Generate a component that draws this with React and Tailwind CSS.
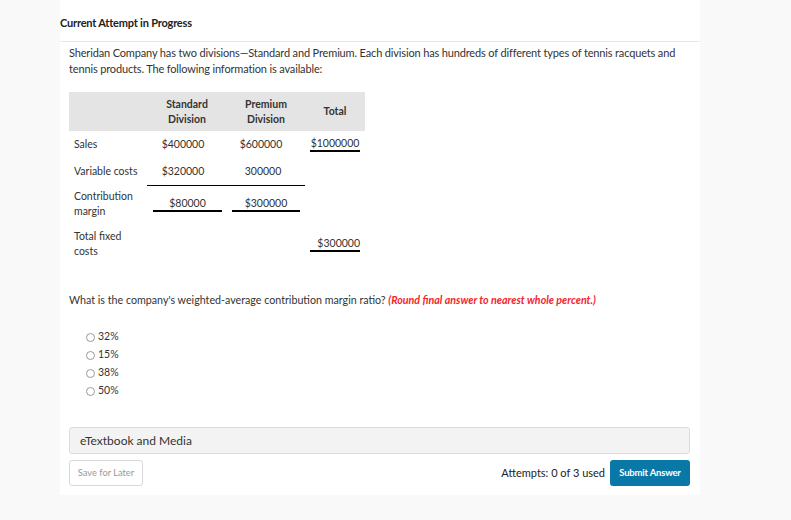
const FONT = { fontFamily: 'Lato, "Open Sans", sans-serif' }

const OPTIONS = ['32%', '15%', '38%', '50%']

export default function App() {
  return (
    <div className="min-h-[520px] bg-[#f9f9f9] text-[#333]" style={FONT}>
      <div className="ml-[60px] w-[640px] h-[495px] bg-white">
        {/* heading */}
        <div className="h-[42px] pt-[16px] border-b border-[#e8e8e8]">
          <h2 className="text-[11px] leading-[14px] font-bold text-[#222] tracking-[-0.2px]">Current Attempt in Progress</h2>
        </div>

        <div className="pl-[9px] pr-[10px]">
          <p className="pt-[3px] text-[11px] leading-[16px] text-[#333] tracking-[-0.15px]">
            Sheridan Company has two divisions—Standard and Premium. Each division has hundreds of different types of tennis racquets and tennis products. The following information is available:
          </p>

          {/* table */}
          <div className="mt-[15px] w-[296px] text-[10.5px] text-[#333]">
            <div className="flex h-[39px] bg-[#e4e4e4] font-bold items-center text-center leading-[15px]">
              <div className="w-[78px]"></div>
              <div className="w-[80px]">Standard<br />Division</div>
              <div className="w-[78px]">Premium<br />Division</div>
              <div className="w-[60px]">Total</div>
            </div>

            <div className="flex h-[27px] items-center">
              <div className="w-[78px] pl-[5px]">Sales</div>
              <div className="w-[80px] text-center pr-[8px]">$400000</div>
              <div className="w-[78px] text-center pr-[10px]">$600000</div>
              <div className="w-[60px] flex justify-end pr-[5px]">
                <span className="w-[50px] text-center leading-[14px] border-b-2 border-black mt-[-2px]">$1000000</span>
              </div>
            </div>

            <div className="flex h-[28px] items-stretch">
              <div className="w-[78px] pl-[5px] flex items-center">Variable costs</div>
              <div className="w-[80px] text-center pr-[8px] flex items-center justify-center border-b border-black">$320000</div>
              <div className="w-[78px] text-center pr-[6px] flex items-center justify-center border-b border-black">300000</div>
              <div className="w-[60px]"></div>
            </div>

            <div className="flex h-[40px] items-start pt-[3px]">
              <div className="w-[78px] pl-[5px] leading-[15px]">Contribution margin</div>
              <div className="w-[80px] pl-[6px] pr-[5px] pt-[7px]">
                <div className="text-center leading-[14px] border-b-2 border-black">$80000</div>
              </div>
              <div className="w-[78px] pl-[5px] pr-[5px] pt-[7px]">
                <div className="text-center leading-[14px] border-b-2 border-black">$300000</div>
              </div>
              <div className="w-[60px]"></div>
            </div>

            <div className="flex items-start pt-[3px]">
              <div className="w-[78px] pl-[5px] leading-[15px]">Total fixed costs</div>
              <div className="w-[80px]"></div>
              <div className="w-[78px]"></div>
              <div className="w-[60px] flex justify-end pr-[5px] pt-[7px]">
                <span className="w-[50px] text-right leading-[14px] border-b-2 border-black">$300000</span>
              </div>
            </div>
          </div>

          {/* question */}
          <p className="mt-[34px] text-[10.7px] leading-[14px] text-[#333]">
            What is the company's weighted-average contribution margin ratio?{' '}
            <span className="italic font-bold text-[#f5242c]">(Round final answer to nearest whole percent.)</span>
          </p>

          <div className="mt-[23px] pl-[17px] flex flex-col gap-[4px]">
            {OPTIONS.map(o => (
              <label key={o} className="flex items-center h-[14px] text-[10.5px] text-[#333]">
                <span className="w-[9px] h-[9px] rounded-full border border-[#999] bg-white mr-[3px]"></span>
                {o}
              </label>
            ))}
          </div>

          {/* eTextbook */}
          <div className="mt-[29px] w-[621px] h-[27px] flex items-center px-[10px] bg-[#f3f3f3] border border-[#dcdcdc] rounded-[3px] text-[12px] text-[#333]">
            eTextbook and Media
          </div>

          <div className="mt-[6px] w-[621px] flex items-center">
            <button className="h-[26px] w-[74px] border border-[#d8d8d8] rounded-[3px] bg-white text-[9.3px] text-[#999]">Save for Later</button>
            <span className="ml-auto text-[11px] text-[#222]">Attempts: 0 of 3 used</span>
            <button className="ml-[5px] h-[26px] w-[80px] bg-[#0a78a7] rounded-[3px] text-white font-bold text-[9.5px] tracking-[-0.2px]">Submit Answer</button>
          </div>
        </div>
      </div>
    </div>
  )
}
